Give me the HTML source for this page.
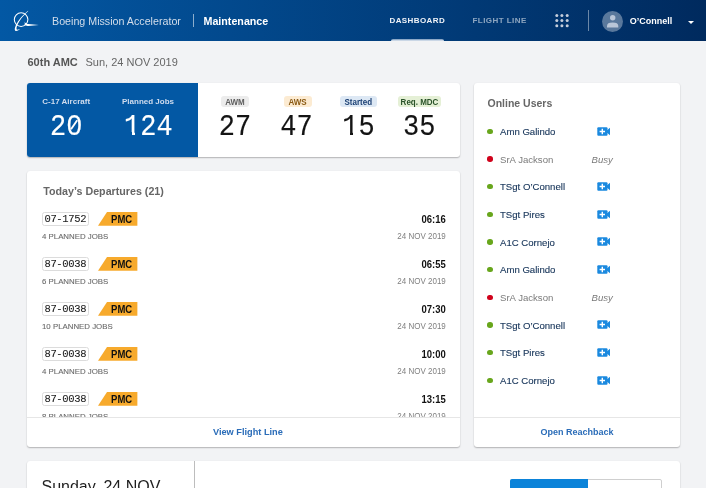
<!DOCTYPE html>
<html><head><meta charset="utf-8">
<style>
*{box-sizing:border-box;margin:0;padding:0}
html,body{width:706px;height:488px;overflow:hidden;background:#f2f3f5;font-family:"Liberation Sans",sans-serif;}
.a{position:absolute;line-height:1;white-space:nowrap}
.hdr{position:absolute;left:0;top:0;width:706px;height:41px;background:linear-gradient(90deg,#0358a4 0%,#002a5e 100%)}
.card{position:absolute;background:#fff;border-radius:3px;box-shadow:0 1px 1.5px rgba(0,0,0,0.26),0 0 1.5px rgba(0,0,0,0.08)}
.mono{font-family:"Liberation Mono",monospace}
.c{text-align:center}
.big{transform:scaleY(1.06);transform-origin:50% 20.7px}
.r{text-align:right}
.badge{position:absolute;height:11px;border-radius:3px;font-size:8px;line-height:12.4px;text-align:center;font-weight:700}
.badge span{display:inline-block;transform:translateY(0.6px) scaleY(1.1);transform-origin:50% 8.3px}
.tail{position:absolute;width:47px;height:14px;border:1px solid #dcdcdc;border-radius:2.5px;font-family:"Liberation Mono",monospace;font-size:10.5px;letter-spacing:-0.34px;line-height:12px;padding-top:0.2px;padding-left:0.6px;color:#1a1a1a;-webkit-text-stroke:0.08px #1a1a1a;text-align:center}
.pmc{position:absolute;width:40px;height:14px}
.pmc svg{position:absolute;left:0;top:0}
.pmc span{position:absolute;left:13.3px;top:2.5px;font-size:9.5px;font-weight:700;color:#111;line-height:1;transform:scaleY(1.06);transform-origin:0 8px}
.jobs{font-size:7.85px;color:#6a6a6a;-webkit-text-stroke:0.1px #6a6a6a}
.time{font-size:9.5px;font-weight:700;color:#111;transform:scaleY(1.07);transform-origin:0 8.04px}
.ddate{font-size:8px;color:#7f7f7f;transform:translateY(0.8px) scaleY(1.1);transform-origin:0 6.8px}
.dot{position:absolute;width:5.5px;height:5.5px;border-radius:50%}
.uname{font-size:9.6px;color:#163459;-webkit-text-stroke:0.12px #163459}
.busy{font-size:9.6px;color:#7a7a7a}
.vid{position:absolute;width:14px;height:10px}
</style></head><body>
<div style="position:absolute;left:0;top:0;width:706px;height:488px;will-change:transform">
<div class="hdr"></div>
<!-- logo -->
<svg class="a" style="left:12px;top:9px" width="30" height="26" viewBox="0 0 30 26">
  <circle cx="9.1" cy="10.6" r="6.8" fill="none" stroke="#fff" stroke-width="1.05"/>
  <path d="M16 1.7 C 11 6, 6.2 10.8, 4 15.8 C 2.7 18.8, 2.2 21.3, 3.5 21.9 C 4.7 22.4, 6.6 21.2, 7.8 20.3 L 7.5 19.9 C 6.3 20.6, 4.9 21, 4.6 20.3 C 4.3 19.3, 4.9 17.2, 5.6 15.6 C 7.6 11.3, 11.3 6.6, 16.3 2.1 Z" fill="#fff"/>
  <path d="M12 12.2 C 12.7 13.8, 14 14.6, 16.2 14.9 L 26.8 15.9 L 16.2 16.9 C 14.6 17, 13.3 16.7, 12.5 16.1 C 13.1 15.2, 12.9 13.6, 12 12.2 Z" fill="#fff"/>
</svg>
<div class="a" style="left:52px;top:15.7px;font-size:10.7px;color:#d3ddea">Boeing Mission Accelerator</div>
<div class="a" style="left:193px;top:14px;width:1px;height:13px;background:rgba(255,255,255,0.55)"></div>
<div class="a" style="left:203.5px;top:15.7px;font-size:10.7px;font-weight:700;color:#fff">Maintenance</div>
<div class="a" style="left:389.5px;top:16.6px;font-size:8px;font-weight:700;letter-spacing:0.4px;color:#f0f3f8">DASHBOARD</div>
<div class="a" style="left:391px;top:38.8px;width:53px;height:2.6px;border-radius:2px 2px 0 0;background:linear-gradient(180deg,rgba(200,215,235,0.55),#e9eef5)"></div>
<div class="a" style="left:472.5px;top:16.6px;font-size:8px;font-weight:700;letter-spacing:0.45px;color:rgba(255,255,255,0.55)">FLIGHT LINE</div>
<!-- grid -->
<svg class="a" style="left:554px;top:13px" width="16" height="16" viewBox="0 0 16 16" fill="#c4cddb">
  <circle cx="2.8" cy="2.5" r="1.5"/><circle cx="7.9" cy="2.5" r="1.5"/><circle cx="13.2" cy="2.5" r="1.5"/>
  <circle cx="2.8" cy="7.5" r="1.5"/><circle cx="7.9" cy="7.5" r="1.5"/><circle cx="13.2" cy="7.5" r="1.5"/>
  <circle cx="2.8" cy="12.7" r="1.5"/><circle cx="7.9" cy="12.7" r="1.5"/><circle cx="13.2" cy="12.7" r="1.5"/>
</svg>
<div class="a" style="left:588.3px;top:10px;width:1px;height:21px;background:rgba(255,255,255,0.42)"></div>
<svg class="a" style="left:602px;top:10.5px" width="21" height="21" viewBox="0 0 21 21">
  <circle cx="10.5" cy="10.5" r="10.5" fill="rgba(255,255,255,0.35)"/>
  <circle cx="10.7" cy="6.8" r="2.7" fill="#b9c6d8"/>
  <path d="M5 16.5 L5 15 Q5 11.6 10.6 11.6 Q16.3 11.6 16.3 15 L16.3 16.5 Z" fill="#b9c6d8"/>
</svg>
<div class="a" style="left:629.7px;top:16.9px;font-size:9px;font-weight:700;color:#fff">O’Connell</div>
<svg class="a" style="left:688px;top:20.7px" width="6" height="3" viewBox="0 0 6 3"><path d="M0 0 L6 0 L3 3 Z" fill="#fff"/></svg>

<!-- date line -->
<div class="a" style="left:27.5px;top:56.7px;font-size:11px;font-weight:700;color:#555">60th AMC</div>
<div class="a" style="left:85.5px;top:56.7px;font-size:11px;color:#666">Sun, 24 NOV 2019</div>

<!-- card 1 -->
<div class="card" style="left:27px;top:83px;width:433px;height:74px">
  <div class="a" style="left:0;top:0;width:171px;height:74px;background:#0358a4;border-radius:3px 0 0 3px"></div>
</div>
<div class="a c" style="left:16.2px;width:100px;top:97.6px;font-size:8px;font-weight:700;color:#d0dcee">C-17 Aircraft</div>
<div class="a c mono big" style="left:16.2px;width:100px;top:114.6px;font-size:27px;color:#fff;-webkit-text-stroke:0.12px #fff">20</div>
<svg class="a" style="left:66px;top:116px" width="18" height="20" viewBox="0 0 18 20"><rect x="5.6" y="5.5" width="4.8" height="5.8" fill="#0358a4"/><path d="M5 13.3 L11.2 4.3" stroke="#fff" stroke-width="1.9"/></svg>
<div class="a c" style="left:98px;width:100px;top:97.6px;font-size:8px;font-weight:700;color:#d0dcee">Planned Jobs</div>
<div class="a c mono big" style="left:98.3px;width:100px;top:114.6px;font-size:27px;color:#fff;-webkit-text-stroke:0.12px #fff">124</div>

<div class="badge" style="left:221px;top:96px;width:28px;background:#ececec;color:#5e5e5e"><span>AWM</span></div>
<div class="badge" style="left:283.5px;top:96px;width:28px;background:#fcebd2;color:#8a5a14"><span>AWS</span></div>
<div class="badge" style="left:339.5px;top:96px;width:37.5px;background:#dde8f4;color:#1a3f73"><span>Started</span></div>
<div class="badge" style="left:398px;top:96px;width:43px;background:#e5f0d6;color:#2a532a"><span>Req. MDC</span></div>
<div class="a c mono big" style="left:185px;width:100px;top:115.3px;font-size:27px;color:#141414;-webkit-text-stroke:0.12px #141414">27</div>
<div class="a c mono big" style="left:246.5px;width:100px;top:115.3px;font-size:27px;color:#141414;-webkit-text-stroke:0.12px #141414">47</div>
<div class="a c mono big" style="left:308.5px;width:100px;top:115.3px;font-size:27px;color:#141414;-webkit-text-stroke:0.12px #141414">15</div>
<div class="a c mono big" style="left:369.3px;width:100px;top:115.3px;font-size:27px;color:#141414;-webkit-text-stroke:0.12px #141414">35</div>

<div class="a" style="left:343.5px;top:131.9px;width:6.4px;height:4px;background:#fff"></div>
<div class="a" style="left:352.9px;top:131.9px;width:5.5px;height:4px;background:#fff"></div>
<div class="a" style="left:125px;top:131.9px;width:6.9px;height:4px;background:#0358a4"></div>
<div class="a" style="left:134.9px;top:131.9px;width:4.5px;height:4px;background:#0358a4"></div>
<!-- card 2 departures -->
<div class="card" style="left:27px;top:171px;width:433px;height:276px;overflow:hidden">
  <div class="a" style="left:0;top:246px;width:433px;height:1px;background:#e6e6e6"></div>
</div>
<div class="a" style="left:43.3px;top:185.8px;font-size:10.7px;font-weight:700;color:#666">Today’s Departures (21)</div>

<div style="position:absolute;left:27px;top:200px;width:433px;height:217px;overflow:hidden">
  <div class="tail" style="left:14.5px;top:12px">07-1752</div>
<div class="pmc" style="left:70.8px;top:12px"><svg width="40" height="14" viewBox="0 0 40 14"><path d="M9 0 L39.4 0 L39.4 13.8 L0 13.8 Z" fill="#f7aa2c"/></svg><span>PMC</span></div>
<div class="a jobs" style="left:15px;top:32.58px">4 PLANNED JOBS</div>
<div class="a r time" style="left:318.8px;width:100px;top:14.76px">06:16</div>
<div class="a r ddate" style="left:318.8px;width:100px;top:32.13px">24 NOV 2019</div>
<div class="tail" style="left:14.5px;top:57px">87-0038</div>
<div class="pmc" style="left:70.8px;top:57px"><svg width="40" height="14" viewBox="0 0 40 14"><path d="M9 0 L39.4 0 L39.4 13.8 L0 13.8 Z" fill="#f7aa2c"/></svg><span>PMC</span></div>
<div class="a jobs" style="left:15px;top:77.58px">6 PLANNED JOBS</div>
<div class="a r time" style="left:318.8px;width:100px;top:59.76px">06:55</div>
<div class="a r ddate" style="left:318.8px;width:100px;top:77.13px">24 NOV 2019</div>
<div class="tail" style="left:14.5px;top:102px">87-0038</div>
<div class="pmc" style="left:70.8px;top:102px"><svg width="40" height="14" viewBox="0 0 40 14"><path d="M9 0 L39.4 0 L39.4 13.8 L0 13.8 Z" fill="#f7aa2c"/></svg><span>PMC</span></div>
<div class="a jobs" style="left:15px;top:122.58px">10 PLANNED JOBS</div>
<div class="a r time" style="left:318.8px;width:100px;top:104.76px">07:30</div>
<div class="a r ddate" style="left:318.8px;width:100px;top:122.13px">24 NOV 2019</div>
<div class="tail" style="left:14.5px;top:147px">87-0038</div>
<div class="pmc" style="left:70.8px;top:147px"><svg width="40" height="14" viewBox="0 0 40 14"><path d="M9 0 L39.4 0 L39.4 13.8 L0 13.8 Z" fill="#f7aa2c"/></svg><span>PMC</span></div>
<div class="a jobs" style="left:15px;top:167.58px">4 PLANNED JOBS</div>
<div class="a r time" style="left:318.8px;width:100px;top:149.76px">10:00</div>
<div class="a r ddate" style="left:318.8px;width:100px;top:167.13px">24 NOV 2019</div>
<div class="tail" style="left:14.5px;top:192px">87-0038</div>
<div class="pmc" style="left:70.8px;top:192px"><svg width="40" height="14" viewBox="0 0 40 14"><path d="M9 0 L39.4 0 L39.4 13.8 L0 13.8 Z" fill="#f7aa2c"/></svg><span>PMC</span></div>
<div class="a jobs" style="left:15px;top:212.58px">8 PLANNED JOBS</div>
<div class="a r time" style="left:318.8px;width:100px;top:194.76px">13:15</div>
<div class="a r ddate" style="left:318.8px;width:100px;top:212.13px">24 NOV 2019</div>
</div>

<div class="a" style="left:213px;top:428px;font-size:9.2px;font-weight:700;color:#2a6cb8">View Flight Line</div>

<!-- card 3 online users -->
<div class="card" style="left:474px;top:83px;width:206px;height:364px">
  <div class="a" style="left:0;top:334px;width:206px;height:1px;background:#e6e6e6"></div>
</div>
<div class="a" style="left:487.5px;top:98.4px;font-size:10.5px;font-weight:700;color:#666">Online Users</div>
<div class="dot" style="left:487.15px;top:128.55px;background:#68a61c"></div>
<div class="a uname" style="left:500px;top:126.87px">Amn Galindo</div>
<svg class="a" style="left:597px;top:126.80px" width="14" height="9" viewBox="0 0 14 9"><rect x="0.3" y="0.3" width="10.2" height="8.4" rx="1" fill="#1a89df"/><path d="M10 3.2 L13 0.8 L13 8.2 L10 5.8 Z" fill="#1a89df"/><path d="M5.3 1.8 V7.2 M2.6 4.5 H8" stroke="#fff" stroke-width="1.4"/></svg>
<div class="dot" style="left:487.15px;top:156.22px;background:#d0021b"></div>
<div class="a busy" style="left:500px;top:154.54px">SrA Jackson</div>
<div class="a busy" style="left:591.5px;top:154.54px;font-style:italic">Busy</div>
<div class="dot" style="left:487.15px;top:183.89px;background:#68a61c"></div>
<div class="a uname" style="left:500px;top:182.21px">TSgt O’Connell</div>
<svg class="a" style="left:597px;top:182.14px" width="14" height="9" viewBox="0 0 14 9"><rect x="0.3" y="0.3" width="10.2" height="8.4" rx="1" fill="#1a89df"/><path d="M10 3.2 L13 0.8 L13 8.2 L10 5.8 Z" fill="#1a89df"/><path d="M5.3 1.8 V7.2 M2.6 4.5 H8" stroke="#fff" stroke-width="1.4"/></svg>
<div class="dot" style="left:487.15px;top:211.56px;background:#68a61c"></div>
<div class="a uname" style="left:500px;top:209.88px">TSgt Pires</div>
<svg class="a" style="left:597px;top:209.81px" width="14" height="9" viewBox="0 0 14 9"><rect x="0.3" y="0.3" width="10.2" height="8.4" rx="1" fill="#1a89df"/><path d="M10 3.2 L13 0.8 L13 8.2 L10 5.8 Z" fill="#1a89df"/><path d="M5.3 1.8 V7.2 M2.6 4.5 H8" stroke="#fff" stroke-width="1.4"/></svg>
<div class="dot" style="left:487.15px;top:239.23px;background:#68a61c"></div>
<div class="a uname" style="left:500px;top:237.55px">A1C Cornejo</div>
<svg class="a" style="left:597px;top:237.48px" width="14" height="9" viewBox="0 0 14 9"><rect x="0.3" y="0.3" width="10.2" height="8.4" rx="1" fill="#1a89df"/><path d="M10 3.2 L13 0.8 L13 8.2 L10 5.8 Z" fill="#1a89df"/><path d="M5.3 1.8 V7.2 M2.6 4.5 H8" stroke="#fff" stroke-width="1.4"/></svg>
<div class="dot" style="left:487.15px;top:266.90px;background:#68a61c"></div>
<div class="a uname" style="left:500px;top:265.22px">Amn Galindo</div>
<svg class="a" style="left:597px;top:265.15px" width="14" height="9" viewBox="0 0 14 9"><rect x="0.3" y="0.3" width="10.2" height="8.4" rx="1" fill="#1a89df"/><path d="M10 3.2 L13 0.8 L13 8.2 L10 5.8 Z" fill="#1a89df"/><path d="M5.3 1.8 V7.2 M2.6 4.5 H8" stroke="#fff" stroke-width="1.4"/></svg>
<div class="dot" style="left:487.15px;top:294.57px;background:#d0021b"></div>
<div class="a busy" style="left:500px;top:292.89px">SrA Jackson</div>
<div class="a busy" style="left:591.5px;top:292.89px;font-style:italic">Busy</div>
<div class="dot" style="left:487.15px;top:322.24px;background:#68a61c"></div>
<div class="a uname" style="left:500px;top:320.56px">TSgt O’Connell</div>
<svg class="a" style="left:597px;top:320.49px" width="14" height="9" viewBox="0 0 14 9"><rect x="0.3" y="0.3" width="10.2" height="8.4" rx="1" fill="#1a89df"/><path d="M10 3.2 L13 0.8 L13 8.2 L10 5.8 Z" fill="#1a89df"/><path d="M5.3 1.8 V7.2 M2.6 4.5 H8" stroke="#fff" stroke-width="1.4"/></svg>
<div class="dot" style="left:487.15px;top:349.91px;background:#68a61c"></div>
<div class="a uname" style="left:500px;top:348.23px">TSgt Pires</div>
<svg class="a" style="left:597px;top:348.16px" width="14" height="9" viewBox="0 0 14 9"><rect x="0.3" y="0.3" width="10.2" height="8.4" rx="1" fill="#1a89df"/><path d="M10 3.2 L13 0.8 L13 8.2 L10 5.8 Z" fill="#1a89df"/><path d="M5.3 1.8 V7.2 M2.6 4.5 H8" stroke="#fff" stroke-width="1.4"/></svg>
<div class="dot" style="left:487.15px;top:377.58px;background:#68a61c"></div>
<div class="a uname" style="left:500px;top:375.90px">A1C Cornejo</div>
<svg class="a" style="left:597px;top:375.83px" width="14" height="9" viewBox="0 0 14 9"><rect x="0.3" y="0.3" width="10.2" height="8.4" rx="1" fill="#1a89df"/><path d="M10 3.2 L13 0.8 L13 8.2 L10 5.8 Z" fill="#1a89df"/><path d="M5.3 1.8 V7.2 M2.6 4.5 H8" stroke="#fff" stroke-width="1.4"/></svg>
<div class="a c" style="left:527px;width:100px;top:427.9px;font-size:9px;font-weight:700;color:#2a6cb8">Open Reachback</div>

<!-- card 4 bottom -->
<div class="card" style="left:27px;top:461px;width:653px;height:60px">
  <div class="a" style="left:167px;top:0;width:1px;height:60px;background:#bdbdbd"></div>
  <div class="a" style="left:483px;top:18px;width:152px;height:30px;border:1px solid #cfcfcf;border-radius:2px"></div>
  <div class="a" style="left:483px;top:18px;width:78px;height:30px;background:#0b83d9;border-radius:2px 0 0 2px"></div>
</div>
<div class="a" style="left:41.5px;top:478.6px;font-size:16px;color:#1e1e1e">Sunday, 24 NOV</div>
</div>
</body></html>
